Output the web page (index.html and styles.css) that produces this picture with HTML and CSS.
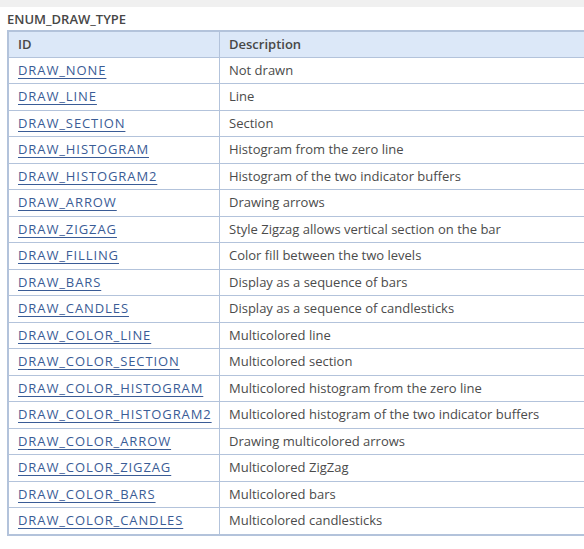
FILE: index.html
```html
<!DOCTYPE html>
<html lang="en">
<head>
    <meta charset="UTF-8">
    <title>ENUM_DRAW_TYPE</title>
    <link rel="stylesheet" href="styles.css">
</head>
<body>
    <div class="topbar"></div>
    <h4 class="enum-title">ENUM_DRAW_TYPE</h4>
    <table class="enum-table">
        <tr><th class="col-id">ID</th><th>Description</th></tr>
        <tr><td><a href="#">DRAW_NONE</a></td><td>Not drawn</td></tr>
        <tr><td><a href="#">DRAW_LINE</a></td><td>Line</td></tr>
        <tr><td><a href="#">DRAW_SECTION</a></td><td>Section</td></tr>
        <tr><td><a href="#">DRAW_HISTOGRAM</a></td><td>Histogram from the zero line</td></tr>
        <tr><td><a href="#">DRAW_HISTOGRAM2</a></td><td>Histogram of the two indicator buffers</td></tr>
        <tr><td><a href="#">DRAW_ARROW</a></td><td>Drawing arrows</td></tr>
        <tr><td><a href="#">DRAW_ZIGZAG</a></td><td>Style Zigzag allows vertical section on the bar</td></tr>
        <tr><td><a href="#">DRAW_FILLING</a></td><td>Color fill between the two levels</td></tr>
        <tr><td><a href="#">DRAW_BARS</a></td><td>Display as a sequence of bars</td></tr>
        <tr><td><a href="#">DRAW_CANDLES</a></td><td>Display as a sequence of candlesticks</td></tr>
        <tr><td><a href="#">DRAW_COLOR_LINE</a></td><td>Multicolored line</td></tr>
        <tr><td><a href="#">DRAW_COLOR_SECTION</a></td><td>Multicolored section</td></tr>
        <tr><td><a href="#">DRAW_COLOR_HISTOGRAM</a></td><td>Multicolored histogram from the zero line</td></tr>
        <tr><td><a href="#">DRAW_COLOR_HISTOGRAM2</a></td><td>Multicolored histogram of the two indicator buffers</td></tr>
        <tr><td><a href="#">DRAW_COLOR_ARROW</a></td><td>Drawing multicolored arrows</td></tr>
        <tr><td><a href="#">DRAW_COLOR_ZIGZAG</a></td><td>Multicolored ZigZag</td></tr>
        <tr><td><a href="#">DRAW_COLOR_BARS</a></td><td>Multicolored bars</td></tr>
        <tr><td><a href="#">DRAW_COLOR_CANDLES</a></td><td>Multicolored candlesticks</td></tr>
    </table>
</body>
</html>
```

FILE: styles.css
```css
body {
    margin: 0;
    font-family: 'Open Sans', 'Liberation Sans', Arial, sans-serif;
    font-size: 13px;
    color: #4b4b4b;
    background: #fff;
    overflow: hidden;
}
.topbar {
    height: 7px;
    background-color: #f0f0f0;
}
.enum-title {
    margin: 0;
    padding: 4px 0 0 7px;
    height: 19px;
    font-size: 13px;
    font-weight: 600;
    line-height: 16px;
    color: #474747;
}
.enum-table {
    margin-left: 7px;
    width: 620px;
    table-layout: fixed;
    border-collapse: collapse;
    border: 2px solid #b3c3db;
}
.enum-table th, .enum-table td {
    text-align: left;
    padding: 6px 9px 6px 9px;
    line-height: 13.5px;
    border: 1px solid #b3c3db;
    white-space: nowrap;
    overflow: visible;
}
.enum-table th {
    background-color: #dce8f8;
    font-weight: 600;
    color: #474747;
    padding-top: 6px;
    padding-bottom: 5px;
}
.enum-table .col-id {
    width: 192px;
}
.enum-table a {
    color: #3a5c96;
    letter-spacing: 0.9px;
    text-decoration: underline;
    text-underline-offset: 3px;
}
```
